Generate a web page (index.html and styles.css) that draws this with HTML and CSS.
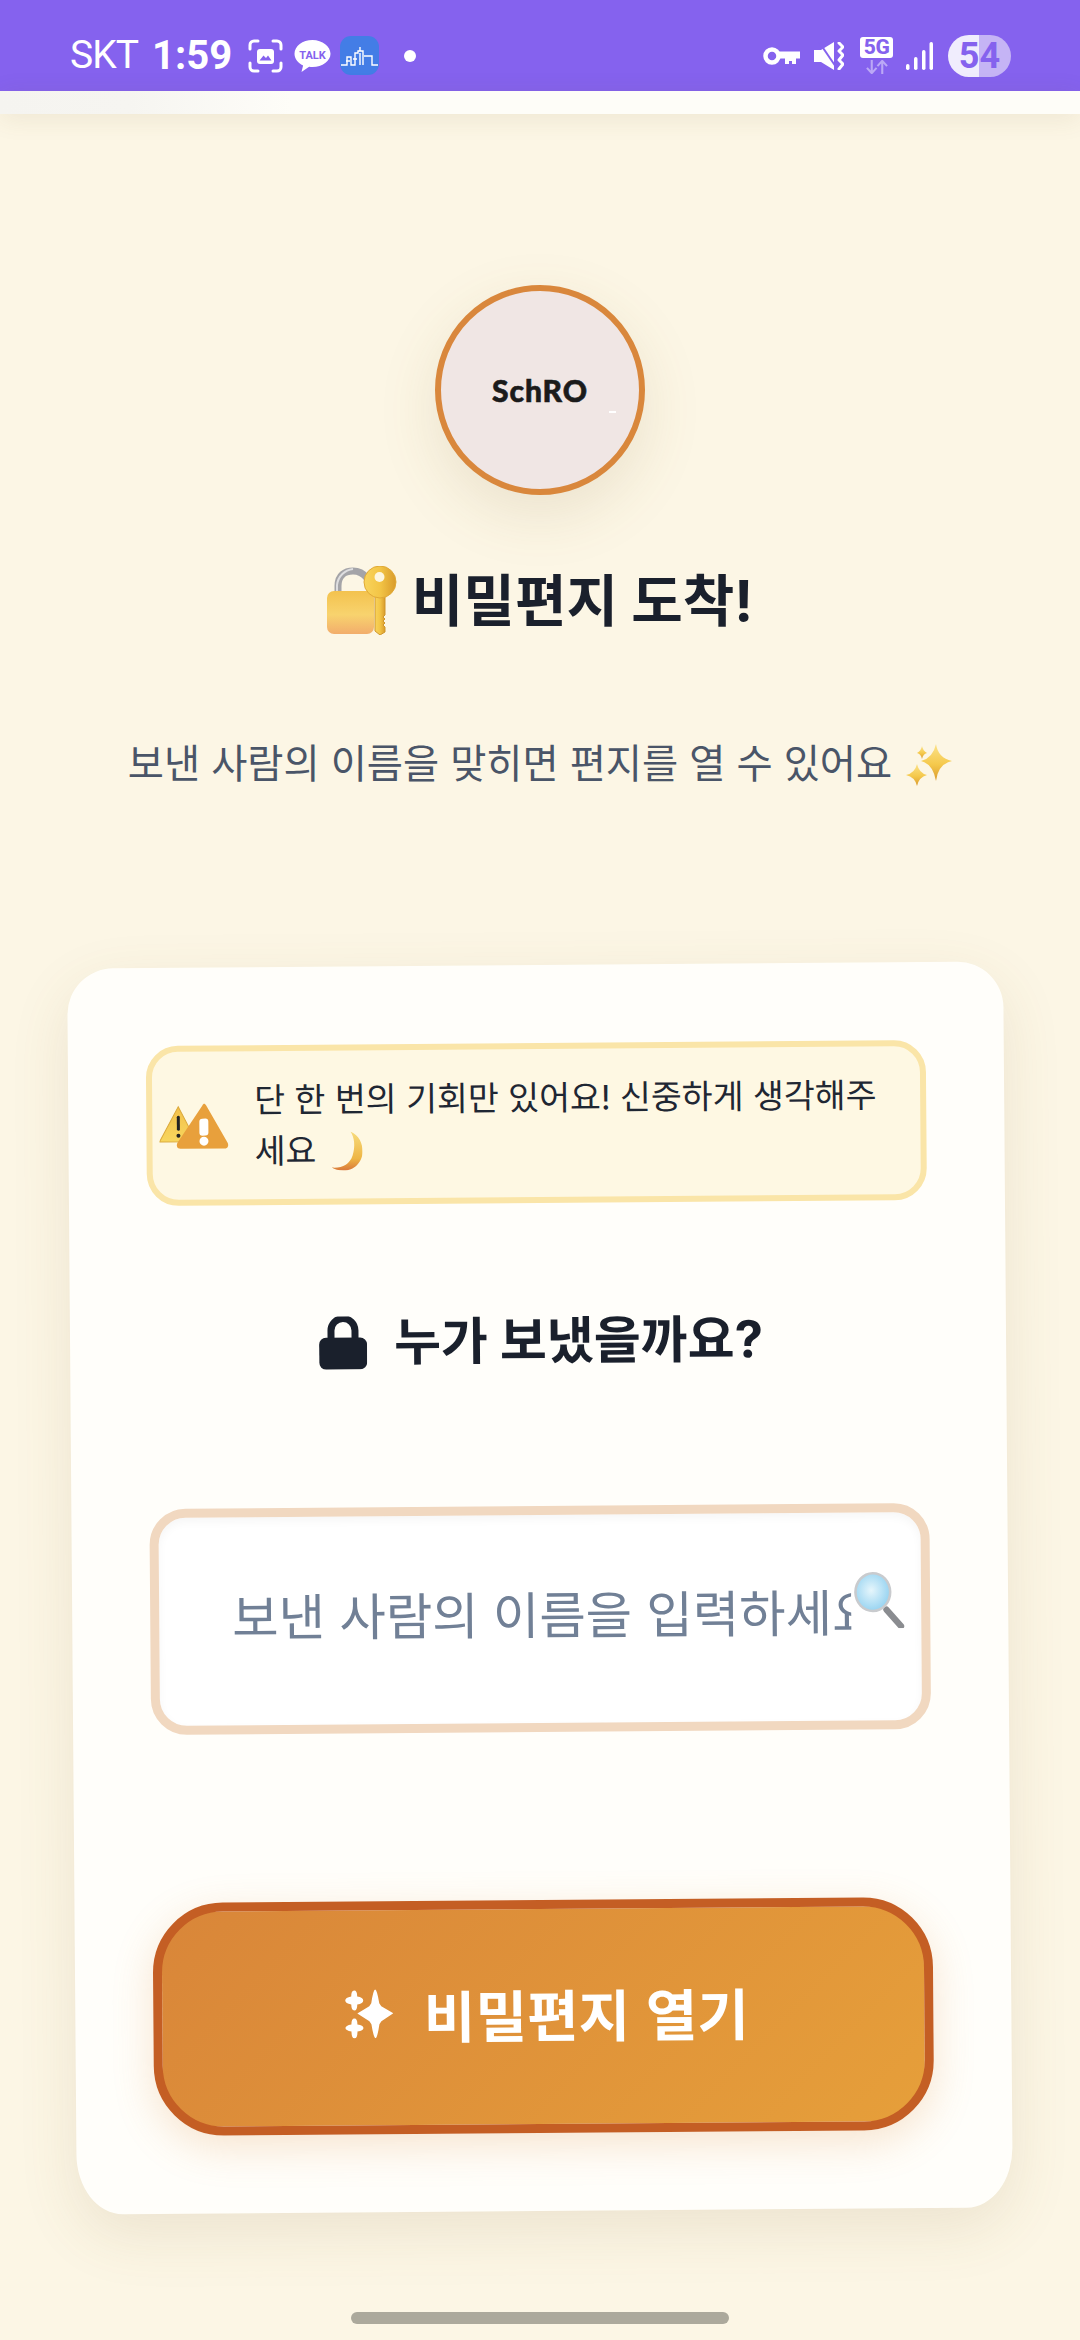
FILE: index.html
```html
<!DOCTYPE html>
<html lang="ko">
<head>
<meta charset="utf-8">
<title>비밀편지 도착</title>
<link rel="stylesheet" href="styles.css">
</head>
<body>
<svg class="defs" width="0" height="0" aria-hidden="true">
  <defs>
    <linearGradient id="gold" x1="0" y1="0" x2="0" y2="1"><stop offset="0" stop-color="#fbe28a"/><stop offset="0.55" stop-color="#f5c94c"/><stop offset="1" stop-color="#d99a2e"/></linearGradient>
    <linearGradient id="lockbody" x1="0" y1="0" x2="0" y2="1"><stop offset="0" stop-color="#f3c24e"/><stop offset="0.55" stop-color="#f8d36e"/><stop offset="1" stop-color="#f2ad6c"/></linearGradient>
    <linearGradient id="keygold" x1="0" y1="0" x2="1" y2="0"><stop offset="0" stop-color="#f9d45c"/><stop offset="0.5" stop-color="#f3c546"/><stop offset="1" stop-color="#d99b2b"/></linearGradient>
    <linearGradient id="moon" x1="0" y1="0" x2="0" y2="1"><stop offset="0" stop-color="#f7dc7d"/><stop offset="0.7" stop-color="#eeb544"/><stop offset="1" stop-color="#d9783a"/></linearGradient>
    <linearGradient id="tri" x1="0" y1="0" x2="0" y2="1"><stop offset="0" stop-color="#f3c04a"/><stop offset="1" stop-color="#f7d65e"/></linearGradient>
    <radialGradient id="glass" cx="0.45" cy="0.45" r="0.6"><stop offset="0" stop-color="#e6f6fc"/><stop offset="1" stop-color="#96d3f1"/></radialGradient>
  </defs>
</svg>

<header class="status">
  <div class="status-left">
    <span class="carrier">SKT</span>
    <span class="clock">1:59</span>
    <svg class="ico-shot" viewBox="0 0 35 34"><path d="M2 10V6a4 4 0 0 1 4-4h4M25 2h4a4 4 0 0 1 4 4v4M33 24v4a4 4 0 0 1-4 4h-4M10 32H6a4 4 0 0 1-4-4v-4" fill="none" stroke="#fff" stroke-width="3" stroke-linecap="round"/><rect x="9" y="10" width="17" height="15" rx="3" fill="#fff"/><path d="M11.500 21.500l4-5 2.500 2.500 2-2.500 3.500 5z" fill="#8562ee"/></svg>
    <svg class="ico-talk" viewBox="0 0 37 34"><path d="M18.500 1C8.500 1 .5 7.200.5 14.800c0 5 3.400 9.300 8.600 11.700L7.500 33l7.600-5.200c1.100.2 2.200.2 3.400.2 10 0 18-6 18-13.200S28.500 1 18.500 1z" fill="#fff"/><text x="18.500" y="19.500" text-anchor="middle" class="talk-label">TALK</text></svg>
    <svg class="ico-city" viewBox="0 0 39 39"><rect width="39" height="39" rx="11" fill="#437de6"/><path d="M1 29h6V21h4v8h4V17h3v-2h2v-4 4h3v14M20 29V17M24 20h8v9h6M6 25h4M13 23h4" fill="none" stroke="#fff" stroke-width="1.400"/></svg>
    <span class="dot"></span>
  </div>
  <div class="status-right">
    <svg class="ico-key" viewBox="0 0 37 18"><circle cx="9" cy="9" r="6.500" fill="none" stroke="#fff" stroke-width="4.500"/><path d="M14 4.500h23v7h-4v5.500h-4v-3h-3v3h-4v-5.500h-8z" fill="#fff"/></svg>
    <svg class="ico-mute" viewBox="0 0 30 28"><path d="M0 8h7L20 0v28L7 20H0z" fill="#fff"/><path d="M5 0l17 25" stroke="#8562ee" stroke-width="2"/><path d="M25 1l4 4-4 4 4 4-4 5 4 4-4 5" fill="none" stroke="#fff" stroke-width="3" stroke-linecap="round" stroke-linejoin="round"/></svg>
    <div class="net">
      <span class="net-badge">5G</span>
      <svg class="net-arrows" viewBox="0 0 32 16"><path d="M10 0v14M4.500 9l5.500 6 5.500-6M22 16V2M16.500 7L22 1l5.500 6" fill="none" stroke="#bba8f6" stroke-width="2.400"/></svg>
    </div>
    <svg class="ico-signal" viewBox="0 0 27 28"><g fill="#fff"><rect x="0" y="22" width="3.500" height="6" rx="1.700"/><rect x="8" y="15" width="3.500" height="13" rx="1.700"/><rect x="16" y="8" width="3.500" height="20" rx="1.700"/><rect x="23.500" y="0" width="3.500" height="28" rx="1.700"/></g></svg>
    <div class="battery"><span>54</span></div>
  </div>
</header>
<div class="strip"></div>

<main class="page">
  <div class="logo">
    <span class="logo-text">SchRO</span>
    <span class="logo-dash"></span>
  </div>

  <h1 class="title">
    <svg class="emoji-lockkey" viewBox="0 0 70 69">
      <path d="M11 30V20C11 9 18 5 26 5c6 0 10 2 14 7" fill="none" stroke="#a4a4a8" stroke-width="7"/>
      <path d="M10 28V19C11 10 18 4 26 3" fill="none" stroke="#dedee0" stroke-width="2"/>
      <rect x="0" y="25" width="47" height="43" rx="7" fill="url(#lockbody)"/>
      <path d="M48 28v37l5 4 5-3v-5l-2-2 2-2-2-2 2-2-2-2 2-2V28z" fill="url(#keygold)" stroke="#cf962c" stroke-width="1"/>
      <circle cx="53" cy="16" r="16" fill="url(#keygold)" stroke="#e0a936" stroke-width="1"/>
      <circle cx="52.500" cy="11" r="5" fill="#fdf6df"/>
    </svg>
    <span>비밀편지 도착!</span>
  </h1>

  <p class="sub">보낸 사람의 이름을 맞히면 편지를 열 수 있어요
    <svg class="emoji-sparkle" viewBox="0 0 46 44">
      <path d="M30 2Q32 16 46 19Q32 22 30 39Q27 22 15 19Q27 16 30 2z" fill="url(#gold)"/>
      <path d="M11 22Q13 31 21 33Q13 35 11 44Q9 35 0 33Q9 31 11 22z" fill="url(#gold)"/>
      <path d="M16 4Q17 9 21 11Q17 12 16 17Q15 12 11 11Q15 9 16 4z" fill="url(#gold)"/>
    </svg>
  </p>

  <section class="card">
    <div class="warn">
      <svg class="emoji-warn" viewBox="0 0 70 48">
        <path d="M19 5L37 40H0z" fill="url(#tri)" stroke="#dba93b" stroke-width="1"/>
        <rect x="17.500" y="14" width="3" height="15" rx="1.500" fill="#222"/><circle cx="19" cy="34" r="2" fill="#222"/>
        <path d="M43 4c1.500-2.500 2.500-2.500 4 0l21 37c1.500 3 .5 6-3 6H21c-3.500 0-4.500-3-3-6z" fill="#e8a03c"/>
        <rect x="40" y="17" width="9" height="17" rx="3" fill="#fff"/><circle cx="44.500" cy="39.500" r="4.500" fill="#fff"/>
      </svg>
      <p class="warn-text">단 한 번의 기회만 있어요! 신중하게 생각해주세요
        <svg class="emoji-moon" viewBox="0 0 31 39"><path d="M19 0C28 4 31 12 31 20c0 11-9 19-19 19-5 0-9-1-12-3 10 1 18-3 21-12C24 15 23 6 19 0z" fill="url(#moon)"/></svg>
      </p>
    </div>

    <h2 class="ask">
      <svg class="ico-lock" viewBox="0 0 48 53"><path d="M12 24V14a12 12 0 0 1 24 0v10" fill="none" stroke="#1a202c" stroke-width="7"/><rect x="0" y="21" width="48" height="32" rx="7" fill="#1a202c"/></svg>
      <span>누가 보냈을까요?</span>
    </h2>

    <div class="field">
      <input class="field-input" type="text" placeholder="보낸 사람의 이름을 입력하세요">
      <svg class="emoji-search" viewBox="0 0 51 55">
        <path d="M32 37l14 16" stroke="#8a8c90" stroke-width="6" stroke-linecap="round"/>
        <ellipse cx="19" cy="20" rx="18" ry="19.500" fill="#c9cbce"/>
        <ellipse cx="19" cy="20" rx="15.500" ry="17" fill="url(#glass)"/>
      </svg>
    </div>

    <button class="open" type="button">
      <svg class="ico-spark" viewBox="0 0 49 49"><g fill="#fff">
        <path d="M31 0Q33 1 35 14L37 17L49 24L37 32L35 35Q33 48 31 49Q29 48 27 35L25 32L13 24L25 17L27 14Q29 1 31 0z"/>
        <path d="M10 1Q13 1 13 7Q19 8 19 11Q19 14 13 15Q13 21 10 21Q7 21 7 15Q1 14 1 11Q1 8 7 7Q7 1 10 1z"/>
        <path d="M10 29Q13 29 13 35Q19 36 19 38.500Q19 41 13 42Q13 49 10 49Q7 49 7 42Q1 41 1 38.500Q1 36 7 35Q7 29 10 29z"/>
      </g></svg>
      <span>비밀편지 열기</span>
    </button>
  </section>
</main>

<div class="home"></div>
</body>
</html>
```

FILE: styles.css
```css
* { box-sizing: border-box; }
html, body { margin: 0; padding: 0; }
body {
  position: relative;
  width: 1080px;
  height: 2340px;
  overflow: hidden;
  background: #fcf6e5;
  font-family: Inter, "Noto Sans CJK KR", sans-serif;
  color: #1a202c;
}
.defs { position: absolute; }

/* status bar */
.status {
  height: 91px;
  background: #8562ee;
  color: #fff;
  padding: 20px 69px 0 70px;
  display: flex;
  align-items: center;
  justify-content: space-between;
}
.status-left, .status-right { display: flex; align-items: center; }
.carrier { font: 400 39px/1 Roboto, sans-serif; letter-spacing: -1px; width: 82px; }
.clock { font: 700 40px/1 Roboto, sans-serif; width: 96px; }
.ico-shot { width: 35px; height: 34px; }
.ico-talk { width: 37px; height: 34px; margin-left: 11px; }
.talk-label { font: 700 11px Roboto, sans-serif; fill: #8562ee; }
.ico-city { width: 39px; height: 39px; margin-left: 9px; }
.dot { width: 12px; height: 12px; border-radius: 50%; background: #fff; margin-left: 25px; }
.ico-key { width: 37px; height: 18px; }
.ico-mute { width: 30px; height: 28px; margin-left: 14px; }
.net { width: 33px; margin-left: 16px; display: flex; flex-direction: column; align-items: center; gap: 2px; }
.net-badge {
  width: 33px; height: 21px; background: #fff; border-radius: 3px;
  color: #8562ee; font: 800 21px/21px Roboto, sans-serif; letter-spacing: -.5px; text-align: center;
}
.net-arrows { width: 28px; height: 14px; }
.ico-signal { width: 27px; height: 28px; margin-left: 13px; }
.battery {
  width: 63px; height: 42px; margin-left: 15px; border-radius: 21px;
  background: linear-gradient(90deg, #f0edfd 0 50%, #c5b4f5 50% 100%);
  color: #8562ee; font: 700 36px/42px Roboto, sans-serif; text-align: center;
}

.strip {
  height: 23px;
  background: linear-gradient(90deg, #f5f4f0 0, #f6f5f1 12%, #fefdf8 27%);
  box-shadow: 0 4px 26px rgba(110, 90, 50, .11);
  position: relative;
}

/* page */
.page { display: flex; flex-direction: column; align-items: center; padding-top: 171px; }
.logo {
  position: relative;
  width: 210px; height: 210px;
  border-radius: 50%;
  border: 6px solid #d9873c;
  background: #f0e6e4;
  box-shadow: 0 20px 60px rgba(120, 100, 50, .13);
  display: flex; align-items: center; justify-content: center;
}
.logo-text { font: 900 30px/1 Lato, sans-serif; letter-spacing: 1px; color: #1b1b1b; -webkit-text-stroke: .6px #1b1b1b; }
.logo-dash { position: absolute; left: 168px; top: 120px; width: 7px; height: 2px; background: #fff; }

.title {
  margin: 71px 0 0;
  display: flex; align-items: center; gap: 15px;
  font-size: 56px; line-height: 68px; font-weight: 700;
}
.emoji-lockkey { width: 70px; height: 69px; }
.sub {
  margin: 104px 0 0;
  font-size: 39.300px; line-height: 50px; font-weight: 400; color: #4a5568;
  white-space: nowrap;
}
.emoji-sparkle { width: 46px; height: 44px; vertical-align: -8px; margin-left: 3px; }

/* card */
.card {
  margin-top: 176px;
  width: 936px;
  padding: 78px;
  background: #fffefa;
  border-radius: 46px 46px 46px 46px / 46px 46px 60px 60px;
  box-shadow: 0 20px 60px rgba(120, 100, 50, .12);
  transform: rotate(-0.45deg);
}
.warn {
  height: 160px;
  display: flex; align-items: center; gap: 25px;
  padding: 0 30px 0 7px;
  background: #fef8e3;
  border: 6px solid #fae5a8;
  border-radius: 32px;
}
.emoji-warn { width: 70px; height: 48px; flex: none; }
.warn-text { margin: 0; font-size: 33.600px; line-height: 51px; color: #1f2733; }
.emoji-moon { width: 31px; height: 39px; vertical-align: -8px; margin-left: 6px; }

.ask {
  margin: 108px 0 0;
  padding-left: 6px;
  display: flex; align-items: center; justify-content: center; gap: 27px;
  font-size: 51px; line-height: 60px; font-weight: 700;
}
.ico-lock { width: 48px; height: 53px; }

.field { position: relative; margin-top: 135px; height: 226px; }
.field-input {
  display: block;
  width: 100%; height: 100%;
  padding: 0 70px 15px 73px;
  border: 9px solid #f1d8c0;
  border-radius: 36px;
  background: #fff;
  box-shadow: inset 0 4px 10px rgba(0, 0, 0, .04);
  font: 400 50.500px "Noto Sans CJK KR", sans-serif;
  color: #1a202c;
  outline: none;
}
.field-input::placeholder { color: #718096; opacity: 1; }
.emoji-search { position: absolute; left: 703px; top: 68px; width: 53px; height: 57px; }

.open {
  margin-top: 168px;
  width: 100%; height: 233px;
  display: flex; align-items: center; justify-content: center; gap: 31px;
  border: 9px solid #c45e24;
  border-radius: 70px;
  background: linear-gradient(135deg, #d98639, #e69f3a);
  box-shadow: 0 12px 40px rgba(217, 135, 60, .22);
  color: #fff;
  font: 700 56px "Noto Sans CJK KR", sans-serif;
  padding: 0 0 8px 6px;
}
.ico-spark { width: 49px; height: 49px; }

.home {
  position: absolute; left: 351px; top: 2312px;
  width: 378px; height: 12px; border-radius: 6px;
  background: #aca99c;
}
```
